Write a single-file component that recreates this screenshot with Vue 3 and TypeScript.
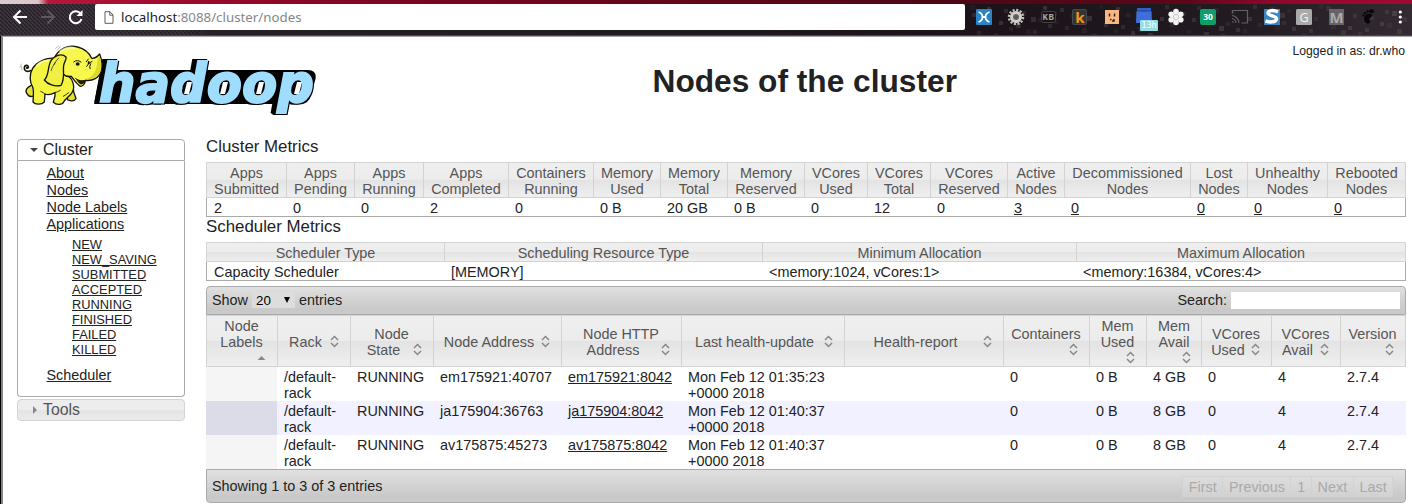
<script setup lang="ts">
interface MetricCol { lines: [string, string]; value: string; width: number; link?: boolean }
interface Col { label: string; width: number; sorted?: boolean }

const metrics: MetricCol[] = [
  { lines: ['Apps', 'Submitted'], value: '2', width: 81 },
  { lines: ['Apps', 'Pending'], value: '0', width: 68 },
  { lines: ['Apps', 'Running'], value: '0', width: 69 },
  { lines: ['Apps', 'Completed'], value: '2', width: 85 },
  { lines: ['Containers', 'Running'], value: '0', width: 85 },
  { lines: ['Memory', 'Used'], value: '0 B', width: 67 },
  { lines: ['Memory', 'Total'], value: '20 GB', width: 67 },
  { lines: ['Memory', 'Reserved'], value: '0 B', width: 77 },
  { lines: ['VCores', 'Used'], value: '0', width: 63 },
  { lines: ['VCores', 'Total'], value: '12', width: 63 },
  { lines: ['VCores', 'Reserved'], value: '0', width: 77 },
  { lines: ['Active', 'Nodes'], value: '3', width: 57, link: true },
  { lines: ['Decommissioned', 'Nodes'], value: '0', width: 126, link: true },
  { lines: ['Lost', 'Nodes'], value: '0', width: 57, link: true },
  { lines: ['Unhealthy', 'Nodes'], value: '0', width: 80, link: true },
  { lines: ['Rebooted', 'Nodes'], value: '0', width: 78, link: true },
]

const scheduler = [
  { label: 'Scheduler Type', value: 'Capacity Scheduler', width: 239 },
  { label: 'Scheduling Resource Type', value: '[MEMORY]', width: 318 },
  { label: 'Minimum Allocation', value: '<memory:1024, vCores:1>', width: 314 },
  { label: 'Maximum Allocation', value: '<memory:16384, vCores:4>', width: 329 },
]

const nodeCols: Col[] = [
  { label: 'Node Labels', width: 72, sorted: true },
  { label: 'Rack', width: 73 },
  { label: 'Node State', width: 83 },
  { label: 'Node Address', width: 128 },
  { label: 'Node HTTP Address', width: 120 },
  { label: 'Last health-update', width: 163 },
  { label: 'Health-report', width: 159 },
  { label: 'Containers', width: 86 },
  { label: 'Mem Used', width: 57 },
  { label: 'Mem Avail', width: 55 },
  { label: 'VCores Used', width: 70 },
  { label: 'VCores Avail', width: 69 },
  { label: 'Version', width: 65 },
]

const nodes: string[][] = [
  ['', '/default-rack', 'RUNNING', 'em175921:40707', 'em175921:8042', 'Mon Feb 12 01:35:23 +0000 2018', '', '0', '0 B', '4 GB', '0', '4', '2.7.4'],
  ['', '/default-rack', 'RUNNING', 'ja175904:36763', 'ja175904:8042', 'Mon Feb 12 01:40:37 +0000 2018', '', '0', '0 B', '8 GB', '0', '4', '2.7.4'],
  ['', '/default-rack', 'RUNNING', 'av175875:45273', 'av175875:8042', 'Mon Feb 12 01:40:37 +0000 2018', '', '0', '0 B', '8 GB', '0', '4', '2.7.4'],
]

const links = ['About', 'Nodes', 'Node Labels', 'Applications']
const states = ['NEW', 'NEW_SAVING', 'SUBMITTED', 'ACCEPTED', 'RUNNING', 'FINISHED', 'FAILED', 'KILLED']
const pages = ['First', 'Previous', '1', 'Next', 'Last']

const squares = Array.from({ length: 90 }, (_, i) => ({
  x: 970 + ((i * 83) % 437),
  y: 5 + ((i * 37 + Math.floor(i / 7) * 5) % 30),
  o: 0.08 + ((i * 13) % 10) / 45,
  s: i % 3 === 0 ? 5 : 4,
}))
</script>

<template>
  <div class="window">
    <header class="chrome">
      <svg class="theme" width="1412" height="36" viewBox="0 0 1412 36">
        <defs>
          <linearGradient id="bar" x1="0" x2="1" y1="0" y2="0">
            <stop offset="0" stop-color="#3c353d" /><stop offset=".13" stop-color="#3a323b" />
            <stop offset=".15" stop-color="#262027" /><stop offset=".7" stop-color="#1b1319" />
            <stop offset=".87" stop-color="#211a21" /><stop offset="1" stop-color="#342b32" />
          </linearGradient>
          <linearGradient id="strip" x1="0" x2="1" y1="0" y2="0">
            <stop offset="0" stop-color="#d9cdd1" /><stop offset=".027" stop-color="#dcc5cb" />
            <stop offset=".034" stop-color="#b9173b" /><stop offset=".13" stop-color="#9b0b2b" />
            <stop offset=".3" stop-color="#77061d" /><stop offset=".68" stop-color="#4d0714" />
            <stop offset=".84" stop-color="#5e0618" /><stop offset=".9" stop-color="#90062b" />
            <stop offset="1" stop-color="#a00a32" />
          </linearGradient>
          <pattern id="hatch" width="4" height="4" patternUnits="userSpaceOnUse">
            <path d="M0 0 L4 4" stroke="#171119" stroke-width="1.2" opacity=".7" />
          </pattern>
        </defs>
        <rect width="1412" height="36" fill="url(#bar)" />
        <rect width="200" height="36" fill="url(#hatch)" />
        <rect v-for="(q, i) in squares" :key="i" :x="q.x" :y="q.y" :width="q.s" :height="q.s" fill="#81737c" :opacity="q.o" />
        <rect width="1412" height="4" fill="url(#strip)" />
        <rect y="35" width="1412" height="1" fill="#4c474d" />
      </svg>
      <div class="nav">
        <svg width="84" height="26" viewBox="0 0 84 26" fill="none" stroke-width="2">
          <path d="M17 13H4.500M10.500 6.500L4 13l6.500 6.500" stroke="#fff" />
          <path d="M31 13h12.500M37.500 6.500L44 13l-6.500 6.500" stroke="#5d575e" />
          <path d="M70.500 9.500A6 6 0 1 0 71.500 15" stroke="#fff" />
          <path d="M72.500 6v6h-6z" fill="#fff" />
        </svg>
      </div>
      <div class="url">
        <svg width="10" height="13" viewBox="0 0 10 13" fill="none" stroke="#5a5a5a"><path d="M1 .7h5L9 4v8.300H1zM5.800 1v3.200H9" /></svg>
        <span class="addr"><b>localhost</b>:8088/cluster/nodes</span>
      </div>
      <div class="exts">
        <svg viewBox="0 0 32 26"><rect x="8" y="5" width="16" height="16" rx="1" fill="#2784c5" /><path d="M10.500 8c3 1 4 2.500 4 5s-1 4-4 5M21.500 8c-3 1-4 2.500-4 5s1 4 4 5M14 13h4" fill="none" stroke="#fff" stroke-width="1.800" /></svg>
        <svg viewBox="0 0 32 26"><circle cx="16" cy="13" r="7" fill="none" stroke="#c4c1bf" stroke-width="2.500" stroke-dasharray="2.100 1.565" /><circle cx="16" cy="13" r="4.500" fill="#69655f" stroke="#d2d0cd" stroke-width="3" /><circle cx="16" cy="13" r="1.500" fill="#5a5652" /></svg>
        <svg viewBox="0 0 32 26"><rect x="9.500" y="7.500" width="14" height="11" rx="2" fill="#171417" stroke="#454045" /><text x="16.500" y="16.400" class="mono" font-size="9">KB</text></svg>
        <svg viewBox="0 0 32 26"><rect x="8.500" y="5.500" width="14" height="15" rx="1" fill="#353535" stroke="#484848" /><text x="16" y="18.500" class="sans" font-size="15" fill="#f7941d">k</text></svg>
        <svg viewBox="0 0 32 26"><rect x="9" y="6" width="14" height="14" fill="#f8b77e" /><path d="M13.500 9.500v3M18.500 9.500v3M14 15.500h1.500M16 17h2v-2" stroke="#332018" stroke-width="1.500" fill="none" /></svg>
        <svg viewBox="0 0 32 30" class="tall"><path d="M9 4h14v3H9z" fill="#345fc2" /><path d="M8.500 7h15l.5 12H8z" fill="#3d6edc" /><path d="M9 7h14" stroke="#213e94" /></svg>
        <svg viewBox="0 0 32 26"><g fill="#f4f4f4"><circle cx="16" cy="7.500" r="2.800" /><circle cx="20.800" cy="10.300" r="2.800" /><circle cx="20.800" cy="15.800" r="2.800" /><circle cx="16" cy="18.500" r="2.800" /><circle cx="11.200" cy="15.800" r="2.800" /><circle cx="11.200" cy="10.300" r="2.800" /><circle cx="16" cy="13" r="4" /></g><circle cx="16" cy="13" r="2.600" fill="none" stroke="#bbb" stroke-width=".8" /></svg>
        <svg viewBox="0 0 32 26"><rect x="8" y="5" width="16" height="16" rx="2" fill="#0f9d6a" /><text x="16" y="16" class="sans" font-size="8.500" fill="#fff">30</text></svg>
        <svg viewBox="0 0 32 26" fill="none" stroke="#656065"><path d="M8.500 9.500v-3h15v12.500h-6M8 11.500a8 8 0 0 1 7 7.500M8 14.500a5 5 0 0 1 4 4.500M8 17.500a2 2 0 0 1 1.500 1.500" stroke-width="1.200" /></svg>
        <svg viewBox="0 0 32 26"><rect x="8" y="5" width="16" height="16" fill="#3e85be" /><path d="M22 8c-4-2-10-2-10 1s9.500 3 8.500 6.300-7 3-11 1.500" fill="none" stroke="#fff" stroke-width="3.500" /></svg>
        <svg viewBox="0 0 32 26"><rect x="8" y="5" width="16" height="16" rx="1.500" fill="#aaa" /><text x="16" y="17.500" class="light" font-size="12.500" fill="#f5f5f5">G</text></svg>
        <svg viewBox="0 0 32 26"><rect x="9" y="5" width="15" height="16" fill="#666366" /><text x="16.500" y="18.500" class="sans" font-size="15" fill="#aaa">M</text></svg>
        <svg viewBox="0 0 32 26"><g fill="#070507"><ellipse cx="19.500" cy="7.300" rx="2.500" ry="2" /><circle cx="15.500" cy="7.500" r="1.200" /><circle cx="13" cy="9.300" r="1.200" /><circle cx="11.200" cy="11.500" r="1.100" /><path d="M12 14c1-5 8-5 8-2.500 0 2-3.500 2.500-3 4 .3 1 1.500.7 1 2.500-1 3-6.500 1.500-6-4z" /></g></svg>
        <svg viewBox="0 0 32 26" fill="#fff"><circle cx="16.300" cy="8" r="1.600" /><circle cx="16.300" cy="13" r="1.600" /><circle cx="16.300" cy="18" r="1.600" /></svg>
        <span class="badge">13h</span>
      </div>
    </header>

    <main class="page">
      <div class="top">
        <svg class="logo" width="310" height="84" viewBox="0 0 310 84">
          <path d="M91 34H298Q307 34 305.500 43L301 59Q299 68 290 68H84Z" fill="#000" />
          <text class="word" x="89" y="65.500" font-size="54" textLength="215" lengthAdjust="spacingAndGlyphs" fill="#9fddff" stroke="#9fddff" stroke-width="2">hadoop</text>
          <g fill="#fff">
            <path d="M177 46h5l-3 12h-5z" /><path d="M213 46h5l-3 12h-5z" /><path d="M249 46h5l-3 12h-5z" /><path d="M287 46h5l-3 12h-5z" />
          </g>
          <g transform="scale(.33333)" stroke="#161608" stroke-width="4" stroke-linejoin="round" stroke-linecap="round">
            <path d="M61 104C50 109 42 104 43 94C44 87 53 86 55 92C56 96 51 98 50 95" fill="none" stroke-width="5" />
            <path d="M160 168C166 175 168 184 174 192C184 196 194 194 198 188C196 178 190 172 190 158" fill="#e2e12c" />
            <path d="M64 148C52 154 46 162 49 170C54 180 61 184 70 180" fill="#e2e12c" />
            <path d="M136 67C110 63 81 77 68 97C57 115 59 139 68 153C72 165 70 181 69 198C76 207 95 206 103 198L105 174C115 178 127 174 135 170C137 184 131 190 130 199C139 208 157 207 161 198C166 188 182 179 187 168C196 153 188 130 176 121Z" fill="#f4f442" />
            <path d="M133 67C145 39 174 25 203 33C224 38 237 50 245 67C256 68 263 61 269 54C275 70 278 91 274 105C267 126 248 136 226 133C226 143 218 151 211 151C200 144 192 132 184 121Q156 125 144 89Z" fill="#f7f74e" />
            <path d="M269 60C274 76 276 93 271 106C262 128 241 131 225 130C250 124 262 104 263 66" fill="#dbda2c" stroke="none" />
            <path d="M168 63C154 49 128 61 120 80C113 99 116 120 103 132C113 145 134 153 153 148C166 128 158 104 161 88C163 77 170 71 168 63Z" fill="#f0f044" />
            <path d="M146 66Q137 75 132 86M136 79Q125 94 123 104" fill="none" stroke-width="2" />
            <path d="M191 78Q201 69 213 78M235 69L229 77M246 76Q235 80 230 91M242 83Q237 92 240 98M197 128Q212 139 229 133" fill="none" stroke-width="3" />
            <ellipse cx="203" cy="84" rx="6" ry="5" fill="#15150a" stroke="none" />
            <ellipse cx="236" cy="80" rx="3" ry="5" fill="#15150a" stroke="none" />
            <path d="M201 132Q211 151 221 141L226 133Q211 138 201 132Z" fill="#26190d" stroke-width="2" />
            <path d="M137 37L145 30M141 43L151 32M30 94L34 84M36 102L34 91" stroke-width="1.500" stroke="#777" fill="none" />
            <path d="M151 46Q173 30 196 37M81 88Q95 73 113 74" stroke="#ffffb0" fill="none" stroke-width="6" opacity=".75" />
            <path d="M92 166Q103 171 105 174M133 170Q143 169 151 163M160 181Q169 176 176 170" fill="none" stroke-width="2.500" />
          </g>
        </svg>
        <h1>Nodes of the cluster</h1>
        <div class="login">Logged in as: dr.who</div>
      </div>

      <div class="body">
        <nav class="side">
          <h3 class="acc open"><i class="tri down"></i>Cluster</h3>
          <div class="panel">
            <ul class="menu">
              <li v-for="l in links" :key="l"><a>{{ l }}</a></li>
            </ul>
            <ul class="sub">
              <li v-for="s in states" :key="s"><a>{{ s }}</a></li>
            </ul>
            <ul class="menu last"><li><a>Scheduler</a></li></ul>
          </div>
          <h3 class="acc closed"><i class="tri right"></i>Tools</h3>
        </nav>

        <section class="content">
          <h2>Cluster Metrics</h2>
          <table class="grid metrics">
            <colgroup><col v-for="(m, i) in metrics" :key="i" :style="{ width: m.width + 'px' }" /></colgroup>
            <thead><tr><th v-for="(m, i) in metrics" :key="i">{{ m.lines[0] }}<br />{{ m.lines[1] }}</th></tr></thead>
            <tbody><tr><td v-for="(m, i) in metrics" :key="i"><a v-if="m.link">{{ m.value }}</a><template v-else>{{ m.value }}</template></td></tr></tbody>
          </table>
          <h2>Scheduler Metrics</h2>
          <table class="grid sched">
            <colgroup><col v-for="s in scheduler" :key="s.label" :style="{ width: s.width + 'px' }" /></colgroup>
            <thead><tr><th v-for="s in scheduler" :key="s.label">{{ s.label }}</th></tr></thead>
            <tbody><tr><td v-for="s in scheduler" :key="s.label">{{ s.value }}</td></tr></tbody>
          </table>

          <div class="bar upper">
            <span>Show</span>
            <span class="select">20<i></i></span>
            <span>entries</span>
            <span class="search">Search:</span>
            <input type="text" aria-label="Search" />
          </div>
          <table class="grid nodes">
            <colgroup><col v-for="c in nodeCols" :key="c.label" :style="{ width: c.width + 'px' }" /></colgroup>
            <thead>
              <tr>
                <th v-for="c in nodeCols" :key="c.label">
                  <div class="sort">{{ c.label }}<span class="icon">
                    <svg v-if="c.sorted" width="16" height="16"><path d="M3.500 10L7.500 6l4 4z" fill="#888" /></svg>
                    <svg v-else width="16" height="16" fill="none" stroke="#888" stroke-width="1.500"><path d="M4 6L7.500 2.500 11 6M4 9l3.500 3.500L11 9" /></svg>
                  </span></div>
                </th>
              </tr>
            </thead>
            <tbody>
              <tr v-for="(n, r) in nodes" :key="r">
                <td v-for="(v, i) in n" :key="i"><a v-if="i === 4">{{ v }}</a><template v-else>{{ v }}</template></td>
              </tr>
            </tbody>
          </table>
          <div class="bar lower">
            <span>Showing 1 to 3 of 3 entries</span>
            <div class="pager"><span v-for="p in pages" :key="p">{{ p }}</span></div>
          </div>
        </section>
      </div>
    </main>
  </div>
</template>

<style>
html, body { margin: 0; background: #fff; overflow: hidden; }
</style>

<style scoped>
* { box-sizing: border-box; }
.window { width: 1412px; height: 504px; overflow: hidden; background: #000; font: 14.4px/16px "Liberation Sans", Arial, sans-serif; color: #222; }
.chrome { position: relative; display: flex; height: 36px; padding-top: 4px; }
.theme { position: absolute; left: 0; top: 0; }
.nav { position: relative; flex: none; width: 95px; padding-left: 10px; }
.url { position: relative; flex: none; width: 870px; height: 26px; background: #fff; border-radius: 2px; display: flex; align-items: center; padding-left: 9px; gap: 7px; }
.addr { font: 13.3px/20px "Noto Sans", sans-serif; color: #868686; }
.addr b { font-weight: 400; color: #1c1c1c; }
.exts { position: relative; display: flex; flex: none; margin-left: 3px; }
.exts svg { width: 32px; height: 26px; display: block; }
.exts .tall { height: 30px; }
.exts text { text-anchor: middle; }
.sans { font-family: "Open Sans", sans-serif; font-weight: 700; }
.light { font-family: "Open Sans", sans-serif; }
.mono { font-family: "Liberation Mono", monospace; font-weight: 700; fill: #aaa6aa; letter-spacing: .5px; }
.badge { position: absolute; left: 172px; top: 16px; width: 18px; height: 11px; border-radius: 1px; background: #96dce5; color: #fff; font: 8px/11px "DejaVu Sans", sans-serif; text-align: center; }
.page { margin-left: 1px; height: 468px; background: #fff; border-left: 2px solid #858585; border-top: 1px solid #a5a5a5; }
.top { height: 101px; display: flex; justify-content: space-between; margin-left: 7px; padding-right: 7px; position: relative; }
.logo { flex: none; margin-top: -1px; overflow: visible; }
.word { font-family: "DejaVu Sans", sans-serif; font-weight: 700; font-style: italic; stroke-linejoin: miter; filter: drop-shadow(1px 1px 0 #000) drop-shadow(-1px -1px 0 #000) drop-shadow(-4px 0 0 #000); }
h1 { margin: 0; font-size: 31.68px; line-height: 36px; font-weight: 700; padding-top: 26px; width: 350px; margin-left: -3px; text-align: center; }
.login { font-size: 12.2px; line-height: 14px; padding-top: 7px; white-space: nowrap; }
.body { display: flex; padding-left: 14px; }
.side { width: 168px; margin-right: 21px; padding-top: 1px; flex: none; }
.acc { margin: 0; display: flex; align-items: center; height: 22px; padding-left: 13px; font-size: 15.84px; line-height: 18px; font-weight: 400; border: 1px solid #aaa; }
.open { border-radius: 4px 4px 0 0; background: #fff; color: #212121; }
.closed { margin-top: 2px; border-color: #d3d3d3; border-radius: 4px; color: #555; background: linear-gradient(#ededed 0 48%, #e4e4e4 50%, #ebebeb); }
.tri { width: 0; height: 0; margin-left: -1px; margin-right: 5px; border: 4px solid transparent; }
.down { border-top-color: #454545; border-bottom: 0; }
.right { border-left-color: #888; border-right: 0; margin: 0 5px 0 2px; padding-right: 1px; }
.panel { height: 236px; border: 1px solid #aaa; border-top: 0; border-radius: 0 0 4px 4px; padding: 4px 0 0 28.5px; }
ul { list-style: none; margin: 0; padding: 0; }
.menu li { line-height: 17px; height: 17px; }
.sub { padding: 4px 0 0 25.5px; font-size: 12.85px; }
.sub li { line-height: 15px; height: 15px; }
.last { padding-top: 10px; }
a { text-decoration: underline; }
.content { width: 1200px; flex: none; }
h2 { margin: 0; font-size: 16.85px; line-height: 19px; height: 25px; font-weight: 400; }
.content h2:first-child { height: 24px; line-height: 17px; }
.grid { width: 1200px; table-layout: fixed; border-collapse: separate; border-spacing: 0; }
th { font-weight: 400; color: #555; text-align: center; vertical-align: middle; border: 1px solid #d3d3d3; border-left-width: 0; padding: 1px 0 0; background: linear-gradient(#efefef 0, #ececec 48%, #e3e3e3 51%, #efefef); }
th:first-child { border-left-width: 1px; }
td { padding: 2px 6px 0 7px; line-height: 16px; vertical-align: top; }
.metrics th { height: 36px; padding-top: 2px; }
.sched th { height: 20px; padding-top: 2px; }
.metrics td, .sched td { height: 19px; border-bottom: 1px solid #aaa; }
.metrics td:first-child, .sched td:first-child { border-left: 1px solid #aaa; }
.metrics td:last-child, .sched td:last-child { border-right: 1px solid #aaa; }
.metrics td, .sched td { padding-top: 3px; padding-bottom: 0; padding-left: 6px; line-height: 15px; }
.metrics td:first-child, .sched td:first-child { padding-left: 7px; }
.bar { display: flex; align-items: center; border: 1px solid #aaa; background: linear-gradient(#e0e0e0, #c8c8c8 85%, #cacaca); padding-left: 5px; }
.upper { margin-top: 5px; height: 29px; border-radius: 4px 4px 0 0; padding-right: 5px; padding-bottom: 1px; }
.select { display: flex; align-items: center; justify-content: space-between; width: 43px; height: 16px; margin: 0 4px; padding: 2px 5px 0 4px; background: #ddd; font-size: 13.33px; color: #000; }
.select i { border: 3.5px solid transparent; border-top: 6px solid #000; border-bottom: 0; margin-top: -2px; }
.search { margin-left: auto; margin-right: 4px; }
.upper input { width: 169px; height: 17px; border: 0; padding: 0; background: #fff; margin-top: 1px; }
.nodes th { height: 52px; padding: 2px 6px 0; }
.sort { text-align: center; margin-right: 1px; }
.nodes th:nth-child(10) .sort { margin-right: 0; }
.icon { float: right; width: 16px; height: 16px; }
.icon svg { display: block; }
.nodes td { height: 34px; padding: 2px 6px 0; }
.nodes td:first-child { background: #f5f5f5; border-right: 1px solid #fff; }
.nodes tr:nth-child(2) td { background: #f1f1ff; }
.nodes tr:nth-child(2) td:first-child { background: #dcdce9; border-right-color: #f1f1ff; }
.lower { height: 34px; margin-top: 0; border-radius: 0 0 4px 4px; justify-content: space-between; padding-right: 12px; }
.pager { display: flex; color: #aaa; height: 21px; }
.pager span { padding: 2px 5.3px; border: 1px solid #d2d2d2; background: rgba(226,226,226,.35); }
.pager span + span { border-left: 0; padding-left: 6px; }
</style>
